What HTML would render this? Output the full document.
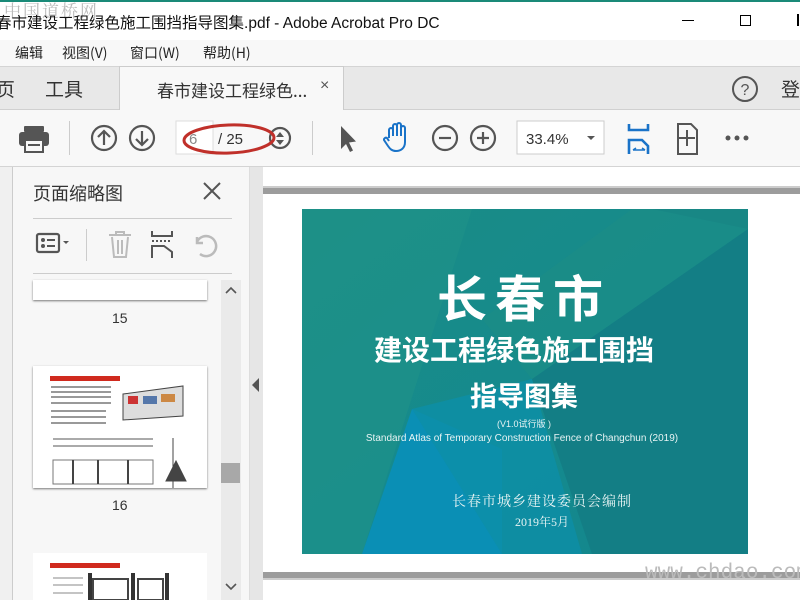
<!DOCTYPE html>
<html><head><meta charset="utf-8"><style>
*{margin:0;padding:0;box-sizing:border-box}
body{width:800px;height:600px;overflow:hidden;position:relative;background:#fff;font-family:"Liberation Sans","Noto Sans CJK SC",sans-serif;color:#222}
.a{position:absolute}
.cj{font-family:"Noto Sans CJK SC",sans-serif}
</style></head><body>
<div class="a" style="left:0;top:0;width:800px;height:40px;background:#fff;border-top:2px solid #1a8a78"></div>
<div class="a cj" style="left:4px;top:-3px;font-size:17px;color:#bbb;letter-spacing:2px;font-family:'Noto Serif CJK SC',serif">中国道桥网</div>
<div class="a cj" style="left:-4px;top:11px;font-size:15.5px;color:#111;white-space:nowrap">春市建设工程绿色施工围挡指导图集<span style="font-family:'Liberation Sans'">.pdf - Adobe Acrobat Pro DC</span></div>
<div class="a" style="left:682px;top:20px;width:12px;height:1px;background:#000"></div>
<div class="a" style="left:740px;top:15px;width:11px;height:11px;border:1px solid #000"></div>
<div class="a" style="left:797px;top:14px;width:2px;height:12px;background:#000"></div>
<div class="a" style="left:0;top:40px;width:800px;height:26px;background:#f8f8f8"></div>
<div class="a cj" style="left:15px;top:43px;font-size:14px;white-space:nowrap;word-spacing:0">编辑</div>
<div class="a cj" style="left:62px;top:43px;font-size:14px">视图(V)</div>
<div class="a cj" style="left:130px;top:43px;font-size:14px">窗口(W)</div>
<div class="a cj" style="left:203px;top:43px;font-size:14px">帮助(H)</div>
<div class="a" style="left:0;top:66px;width:800px;height:44px;background:#e8e8e8;border-top:1px solid #d4d4d4;border-bottom:1px solid #d0d0d0"></div>
<div class="a" style="left:119px;top:66px;width:225px;height:44px;background:#f8f8f8;border-left:1px solid #ccc;border-right:1px solid #ccc;border-top:1px solid #ccc"></div>
<div class="a cj" style="left:-4px;top:75px;font-size:19px;color:#333">页</div>
<div class="a cj" style="left:45px;top:75px;font-size:19px;color:#333">工具</div>
<div class="a cj" style="left:157px;top:77px;font-size:17px;color:#333">春市建设工程绿色...</div>
<div class="a" style="left:320px;top:77px;font-size:16px;color:#555">×</div>
<svg class="a" style="left:731px;top:75px" width="28" height="28"><circle cx="14" cy="14" r="12" fill="none" stroke="#555" stroke-width="2"/><text x="14" y="20" font-size="16" text-anchor="middle" fill="#555" font-family="Liberation Sans">?</text></svg>
<div class="a cj" style="left:781px;top:75px;font-size:19px;color:#333">登</div>
<div class="a" style="left:0;top:110px;width:800px;height:57px;background:#f8f8f8;border-bottom:1px solid #d4d4d4"></div>
<svg class="a" style="left:0;top:110px" width="800" height="56">
<g fill="#555"><rect x="24" y="16" width="20" height="6" rx="1"/><rect x="19" y="22" width="30" height="14" rx="3"/><rect x="25" y="30" width="18" height="12" fill="#f8f8f8" stroke="#555" stroke-width="2"/><rect x="28" y="34" width="12" height="2"/></g>
<rect x="69" y="11" width="1" height="34" fill="#ccc"/>
<g fill="none" stroke="#555" stroke-width="2.2"><circle cx="104" cy="28" r="12"/><path d="M104 35V21M98 27l6-6 6 6"/><circle cx="142" cy="28" r="12"/><path d="M142 21v14M136 29l6 6 6-6"/><circle cx="280" cy="28" r="10"/><circle cx="445" cy="28" r="12"/><path d="M439 28h12"/><circle cx="483" cy="28" r="12"/><path d="M477 28h12M483 22v12"/></g>
<path d="M276 27l4-5 4 5zM276 30l4 5 4-5z" fill="#555"/>
<rect x="176" y="11" width="37" height="33" fill="#fff" stroke="#ddd"/>
<text x="189" y="34" font-size="15" fill="#888" font-family="Liberation Sans">6</text>
<text x="218" y="34" font-size="15" fill="#333" font-family="Liberation Sans">/ 25</text>
<rect x="312" y="11" width="1" height="34" fill="#ccc"/>
<path d="M341 16v23l5-5 4 8 3-1.5-4-8 7-1z" fill="#555"/>
<path d="M389 28v-8a2 2 0 014 0v6v-10a2 2 0 014 0v10v-11a2 2 0 014 0v11v-8a2 2 0 014 0v14c0 6-4 9-9 9c-4 0-6-2-8-5l-4-6a2 2 0 013-2l2 3" fill="none" stroke="#1a73c8" stroke-width="2"/>
<rect x="517" y="11" width="87" height="33" fill="#fff" stroke="#ccc"/>
<text x="526" y="34" font-size="15" fill="#333" font-family="Liberation Sans">33.4%</text>
<path d="M587 26h8l-4 4z" fill="#555"/>
<g fill="none" stroke="#1a73c8" stroke-width="2.6"><path d="M629 14v6h19v-6M629 44v-14h13l6 6v8"/></g><path d="M633 40h12M633 40l3-2M645 40l-3-2" stroke="#1a73c8" stroke-width="1.5"/>
<g fill="none" stroke="#555" stroke-width="2"><path d="M678 14h13l6 6v24h-19z"/><path d="M687 20v16M679 28h16"/></g>
<g fill="#555"><circle cx="728" cy="28" r="2.5"/><circle cx="737" cy="28" r="2.5"/><circle cx="746" cy="28" r="2.5"/></g>
<ellipse cx="229" cy="29" rx="45" ry="14" fill="none" stroke="#c0302a" stroke-width="3" transform="rotate(-2 229 29)"/>
</svg>
<div class="a" style="left:0;top:167px;width:249px;height:433px;background:#f7f7f7"></div>
<div class="a" style="left:0;top:167px;width:13px;height:433px;background:#f0f0f0;border-right:1px solid #ccc"></div>
<div class="a cj" style="left:33px;top:180px;font-size:18px;color:#333">页面缩略图</div>
<svg class="a" style="left:200px;top:180px" width="24" height="24"><path d="M4 3l16 16M20 3L4 19" stroke="#555" stroke-width="2"/></svg>
<div class="a" style="left:33px;top:218px;width:199px;height:1px;background:#ccc"></div>
<div class="a" style="left:33px;top:273px;width:199px;height:1px;background:#ccc"></div>
<svg class="a" style="left:30px;top:225px" width="200" height="40">
<rect x="7" y="9" width="22" height="18" rx="2" fill="none" stroke="#555" stroke-width="2.2"/><circle cx="13" cy="15" r="2" fill="#555"/><circle cx="13" cy="21" r="2" fill="#555"/><path d="M17 15h8M17 21h8" stroke="#555" stroke-width="2"/><path d="M33 16h6l-3 3z" fill="#555"/>
<rect x="56" y="4" width="1" height="32" fill="#ccc"/>
<g stroke="#bbb" stroke-width="2" fill="none"><path d="M79 10h22M86 10v-3h8v3M82 12l2 20h12l2-20M88 15v14M92 15v14"/></g>
<g stroke="#555" stroke-width="2" fill="none"><path d="M122 6v5h20v-5M122 33v-12h12l8 6v6"/></g><path d="M122 16h20" stroke="#555" stroke-dasharray="2 2" stroke-width="2"/>
<path d="M170 29a10 10 0 10-3-12M167 12v6h6" fill="none" stroke="#bbb" stroke-width="2.5"/>
</svg>
<div class="a" style="left:33px;top:280px;width:174px;height:20px;background:#fff;box-shadow:0 1px 2px #777"></div>
<div class="a" style="left:112px;top:310px;font-size:14px;color:#333">15</div>
<svg class="a" style="left:33px;top:366px;box-shadow:0 1px 2px #777;background:#fff" width="174" height="122">
<rect x="17" y="10" width="70" height="5" fill="#d02a1e"/>
<g fill="#999"><rect x="18" y="20" width="60" height="2"/><rect x="18" y="25" width="60" height="2"/><rect x="18" y="30" width="60" height="2"/><rect x="18" y="36" width="60" height="2"/><rect x="18" y="44" width="55" height="2"/><rect x="18" y="50" width="55" height="2"/><rect x="18" y="56" width="55" height="2"/></g>
<path d="M90 28l60-8v30l-60 4z" fill="#ddd" stroke="#444"/><rect x="95" y="30" width="10" height="8" fill="#c33"/><rect x="110" y="30" width="14" height="8" fill="#57a"/><rect x="128" y="28" width="14" height="8" fill="#c84"/>
<path d="M20 73h100M20 80h100" stroke="#555"/><rect x="20" y="94" width="100" height="24" fill="none" stroke="#777"/><path d="M40 94v24M65 94v24M95 94v24" stroke="#444" stroke-width="2"/>
<path d="M140 72v50M133 115l10-20 10 20z" fill="#444" stroke="#444"/>
</svg>
<div class="a" style="left:112px;top:497px;font-size:14px;color:#333">16</div>
<svg class="a" style="left:33px;top:553px;background:#fff" width="174" height="47"><rect x="17" y="10" width="70" height="5" fill="#d02a1e"/><path d="M20 25h30M20 32h30M20 40h30" stroke="#888"/><rect x="55" y="20" width="4" height="27" fill="#333"/><rect x="60" y="26" width="35" height="21" fill="none" stroke="#444" stroke-width="2"/><rect x="98" y="20" width="4" height="27" fill="#333"/><rect x="105" y="26" width="25" height="21" fill="none" stroke="#444" stroke-width="2"/><rect x="132" y="20" width="4" height="27" fill="#333"/></svg>
<div class="a" style="left:221px;top:280px;width:20px;height:320px;background:#eaeaea"></div>
<div class="a" style="left:221px;top:463px;width:19px;height:20px;background:#a8a8a8"></div>
<svg class="a" style="left:221px;top:280px" width="20" height="320"><path d="M5 13l5-5 5 5M5 304l5 5 5-5" fill="none" stroke="#555" stroke-width="1.6"/></svg>
<div class="a" style="left:249px;top:167px;width:14px;height:433px;background:#e6e6e6;border-left:1px solid #ddd"></div>
<svg class="a" style="left:250px;top:378px" width="12" height="14"><path d="M9 0v14L2 7z" fill="#555"/></svg>
<div class="a" style="left:263px;top:167px;width:537px;height:433px;background:#fff"></div>
<div class="a" style="left:263px;top:186px;width:537px;height:8px;background:#9c9c9c;border-top:2px solid #ccc"></div>
<div class="a" style="left:263px;top:572px;width:537px;height:8px;background:#9c9c9c;border-bottom:2px solid #ccc"></div>
<svg class="a" style="left:302px;top:209px" width="446" height="345">
<defs><linearGradient id="g" x1="0" y1="0" x2="1" y2="1"><stop offset="0" stop-color="#1a8c85"/><stop offset="0.6" stop-color="#158a8e"/><stop offset="1" stop-color="#12868c"/></linearGradient></defs>
<rect width="446" height="345" fill="url(#g)"/>
<polygon points="0,0 170,0 60,345 0,345" fill="#1f9288" opacity=".6"/>
<polygon points="60,345 110,200 200,240 200,345" fill="#0a8fb5"/>
<polygon points="110,200 230,170 280,345 200,345" fill="#0c8fa8" opacity=".8"/>
<polygon points="230,170 446,20 446,345 290,345" fill="#137e85"/>
<polygon points="446,20 446,0 350,0" fill="#137e86"/>
<polygon points="330,0 446,0 446,20 230,170 180,110" fill="#1d8e86" opacity=".6"/>
<g fill="#fff" text-anchor="middle" font-family="'Noto Sans CJK SC',sans-serif" font-weight="bold">
<text x="222" y="108" font-size="50" letter-spacing="8">长春市</text>
<text x="212" y="151" font-size="28">建设工程绿色施工围挡</text>
<text x="222" y="197" font-size="27">指导图集</text>
</g>
<g fill="#e8f4f4" text-anchor="middle" font-family="'Liberation Sans','Noto Sans CJK SC',sans-serif">
<text x="222" y="218" font-size="9">(V1.0试行版 )</text>
<text x="220" y="232" font-size="10">Standard Atlas of Temporary Construction Fence of Changchun (2019)</text>
<text x="240" y="297" font-size="14" font-family="'Noto Serif CJK SC',serif" letter-spacing="1">长春市城乡建设委员会编制</text>
<text x="240" y="317" font-size="12" font-family="'Liberation Serif','Noto Serif CJK SC',serif">2019年5月</text>
</g></svg>
<div class="a" style="left:645px;top:562px;font-size:21px;color:#bbb;font-family:'Liberation Mono',monospace">www.chdao.com</div>
</body></html>
